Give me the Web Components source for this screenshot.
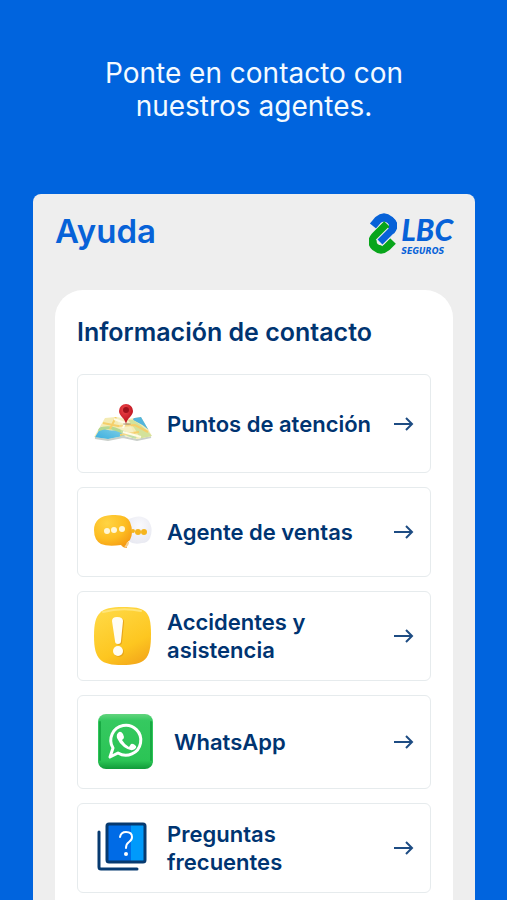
<!DOCTYPE html>
<html lang="es">
<head>
<meta charset="UTF-8">
<meta name="viewport" content="width=device-width, initial-scale=1">
<title>LBC Seguros - Ayuda</title>
<style>
    body {
        margin: 0;
        background: #0064de;
        color: #003471;
        font-family: Inter, "Open Sans", sans-serif;
    }
</style>
</head>
<body>

<help-page>
    <span slot="claim">Ponte en contacto con<br>nuestros agentes.</span>
    <help-panel heading="Ayuda">
        <brand-logo slot="logo"></brand-logo>
        <contact-card heading="Información de contacto">
            <contact-item href="#puntos">
                <svg slot="icon" width="58" height="67" viewBox="0 0 58 67" aria-hidden="true">
                    <defs>
                        <linearGradient id="water" x1="0" y1="1" x2="1" y2="0">
                            <stop offset="0" stop-color="#2faadf"/>
                            <stop offset="1" stop-color="#8ed4e6"/>
                        </linearGradient>
                        <radialGradient id="pin" cx="40%" cy="28%" r="70%">
                            <stop offset="0" stop-color="#f0484b"/>
                            <stop offset="1" stop-color="#b80d1a"/>
                        </radialGradient>
                        <clipPath id="sheet">
                            <path d="M11 28 L22 27 L34 29 L47 27 L58 46 L43 49 L29 46 L14 49 L0 47 Z"/>
                        </clipPath>
                    </defs>
                    <path d="M1 48 L14 50 L29 47 L43 50 L57 47" fill="none" stroke="#c9cfca" stroke-width="2"/>
                    <g clip-path="url(#sheet)">
                        <rect width="58" height="67" fill="#f4ebb4"/>
                        <path d="M0 49 L7 37 Q17 43 24 39 Q29 43 35 51 L14 52Z" fill="url(#water)"/>
                        <path d="M4 40 Q13 36 21 39 T42 48" fill="none" stroke="#b5d891" stroke-width="3"/>
                        <path d="M40 27 L50 27 L55 40 Q48 34 39 30Z" fill="#52b5dc"/>
                        <path d="M34 30 L39 30 Q48 35 58 46 L47 50 Q42 39 34 30Z" fill="#d3e29b"/>
                        <path d="M9 33 L24 36 L41 35 L54 42 M22 27 L16 39 M26 45 L45 42" fill="none" stroke="#f5cf6a" stroke-width="2"/>
                        <path d="M20 29 L31 33 L29 38 M29 42 L47 47" fill="none" stroke="#fffbe3" stroke-width="2"/>
                        <path d="M22 27 L34 29 L43 50 L29 47Z" fill="#fff" opacity=".2"/>
                    </g>
                    <ellipse cx="33" cy="34" rx="4" ry="1" fill="#745c38" opacity=".4"/>
                    <path d="M32 34 C31 28 25 26 25 21 A7 7 0 0 1 39 21 C39 26 33 28 32 34Z" fill="url(#pin)"/>
                    <circle cx="32" cy="20" r="3" fill="#9e111b"/>
                </svg>
                Puntos de atención
            </contact-item>
            <contact-item href="#ventas">
                <svg slot="icon" width="58" height="58" viewBox="0 0 58 58" aria-hidden="true">
                    <defs>
                        <radialGradient id="bubble" cx="35%" cy="25%" r="80%">
                            <stop offset="0" stop-color="#ffd443"/>
                            <stop offset=".6" stop-color="#fdbd22"/>
                            <stop offset="1" stop-color="#f59b14"/>
                        </radialGradient>
                        <radialGradient id="pale" cx="50%" cy="35%" r="65%">
                            <stop offset="0" stop-color="#fafafd"/>
                            <stop offset="1" stop-color="#e9eaf2"/>
                        </radialGradient>
                    </defs>
                    <path d="M33 17 Q46 10 54 17 Q60 25 56 35 Q54 40 48 40 Q40 42 34 38Z" fill="url(#pale)"/>
                    <path d="M18 12 Q33 11 36 19 Q40 29 36 37 Q31 40 33 45 Q29 45 27 42 Q14 44 7 41 Q0 37 0 27 Q0 13 18 12Z" fill="url(#bubble)"/>
                    <path d="M31 44 Q34 42 34 39" fill="none" stroke="#f6cf91" stroke-width="2"/>
                    <g fill="#f5b51e">
                        <circle cx="39" cy="28" r="2"/><circle cx="44" cy="29" r="3"/><circle cx="50" cy="29" r="3"/>
                    </g>
                    <g fill="#fff7d7">
                        <circle cx="13" cy="28" r="3"/><circle cx="20" cy="27" r="3"/><circle cx="28" cy="26" r="3"/>
                    </g>
                </svg>
                Agente de ventas
            </contact-item>
            <contact-item href="#asistencia">
                <svg slot="icon" width="58" height="58" viewBox="0 0 58 58" aria-hidden="true">
                    <defs>
                        <linearGradient id="alert" x1=".2" y1="0" x2=".7" y2="1">
                            <stop offset="0" stop-color="#ffd945"/>
                            <stop offset=".7" stop-color="#fdc620"/>
                            <stop offset="1" stop-color="#f4aa1b"/>
                        </linearGradient>
                    </defs>
                    <path d="M29 0 C51 0 57 3 57 27 C57 53 51 58 28 58 C7 58 0 53 0 29 C0 6 6 0 29 0Z" fill="url(#alert)"/>
                    <path d="M9 5 Q28 0 47 4" fill="none" stroke="#ffe477" stroke-width="2" stroke-linecap="round"/>
                    <path d="M20 14 Q20 10 24 10 Q29 10 29 14 L27 34 Q27 37 24 37 Q22 37 22 34Z" fill="#e8a51a" transform="translate(1 1)"/>
                    <path d="M18 14 Q18 10 23 10 Q29 10 29 14 L27 34 Q27 37 24 37 Q21 37 21 34Z" fill="#fffdf4"/>
                    <circle cx="25" cy="45" r="5" fill="#e8a51a"/>
                    <circle cx="24" cy="44" r="5" fill="#fffdf4"/>
                </svg>
                Accidentes y asistencia
            </contact-item>
            <contact-item href="#whatsapp">
                <svg slot="icon" width="65" height="62" viewBox="0 0 65 62" aria-hidden="true">
                    <defs>
                        <linearGradient id="tile" x1="0" y1="0" x2="0" y2="1">
                            <stop offset="0" stop-color="#63d47e"/>
                            <stop offset=".12" stop-color="#35c960"/>
                            <stop offset=".85" stop-color="#2bc455"/>
                            <stop offset="1" stop-color="#119b39"/>
                        </linearGradient>
                    </defs>
                    <rect x="4" y="3" width="55" height="55" rx="8" fill="url(#tile)"/>
                    <path d="M6 11 V49 M57 11 V49" stroke="#18a943" stroke-width="2" stroke-linecap="round"/>
                    <path d="M16 46 L19 37 A15 15 0 1 1 24 42 Z" fill="none" stroke="#fff" stroke-width="3" stroke-linejoin="round"/>
                    <path d="M25 21 Q27 20 29 23 L30 26 Q30 28 28 29 Q31 34 35 36 L37 33 Q39 32 42 35 Q43 36 41 38 Q37 41 30 36 Q25 32 23 27 Q22 23 25 21Z" fill="#fff"/>
                </svg>
                WhatsApp
            </contact-item>
            <contact-item href="#preguntas">
                <svg slot="icon" width="58" height="58" viewBox="0 0 58 58" aria-hidden="true">
                    <path d="M5 13 V48 Q5 50 7 50 H43" fill="none" stroke="#073a70" stroke-width="3" stroke-linecap="round"/>
                    <rect x="13" y="5" width="38" height="38" rx="2" fill="#006be6"/>
                    <rect x="37" y="5" width="14" height="38" fill="#009afb"/>
                    <rect x="13" y="5" width="38" height="38" rx="2" fill="none" stroke="#073a70" stroke-width="3"/>
                    <path d="M26 18 Q27 13 32 13 Q38 13 38 18 Q38 21 35 23 Q32 25 32 29" fill="none" stroke="#fff" stroke-width="2" stroke-linecap="round"/>
                    <circle cx="32" cy="35" r="2" fill="#fff"/>
                </svg>
                Preguntas frecuentes
            </contact-item>
        </contact-card>
    </help-panel>
</help-page>

<script>
class HelpPage extends HTMLElement {

    constructor() {
        super();
        this.attachShadow({ mode: 'open' });
        this.shadowRoot.innerHTML = `
            <style>
                :host {
                    display: flex;
                    flex-direction: column;
                    min-height: 100vh;
                    box-sizing: border-box;
                    padding: 57px 32px 0 33px;
                }
                p {
                    margin: 0 0 71px;
                    color: #f4faff;
                    font-size: 28px;
                    line-height: 33px;
                    text-align: center;
                }
            </style>
            <p><slot name="claim"></slot></p>
            <slot></slot>
        `;
    }
}

class HelpPanel extends HTMLElement {

    constructor() {
        super();
        this.attachShadow({ mode: 'open' });
    }

    connectedCallback() {
        this.shadowRoot.innerHTML = `
            <style>
                :host {
                    display: flex;
                    flex: 1;
                    flex-direction: column;
                    padding: 16px 22px 0;
                    background: #eeeeee;
                    border-radius: 8px 8px 0 0;
                }
                header {
                    display: flex;
                    justify-content: space-between;
                    align-items: flex-start;
                    height: 80px;
                }
                h1 {
                    margin: 0;
                    color: #0762d8;
                    font-size: 33px;
                    font-weight: 600;
                    line-height: 42px;
                }
            </style>
            <header>
                <h1>${this.getAttribute('heading')}</h1>
                <slot name="logo"></slot>
            </header>
            <slot></slot>
        `;
    }
}

class BrandLogo extends HTMLElement {

    constructor() {
        super();
        this.attachShadow({ mode: 'open' });
        this.shadowRoot.innerHTML = `
            <style>
                :host {
                    display: flex;
                    align-items: center;
                    gap: 4px;
                    padding-top: 2px;
                    color: #0762d8;
                }
                .words {
                    display: flex;
                    flex-direction: column;
                }
                .name {
                    font: italic 900 30px/35px Lato, sans-serif;
                }
                .sub {
                    font: italic bold 8px/9px "DejaVu Sans", sans-serif;
                }
            </style>
            <svg width="28" height="42" viewBox="0 0 28 42" aria-hidden="true">
                <g fill="none" stroke-linejoin="round">
                    <path d="M4 13 L9 7 Q15 2 21 7 Q27 12 22 18 L11 29" stroke="#0762d8" stroke-width="8"/>
                    <path d="M17 12 L6 23 Q1 29 6 34 Q12 39 18 34 L24 28" stroke="#eee" stroke-width="9"/>
                    <path d="M18 11 L6 23 Q1 29 6 34 Q12 39 18 34 L24 28" stroke="#08a51b" stroke-width="8"/>
                    <path d="M22 18 L10 30" stroke="#eee" stroke-width="9"/>
                    <path d="M21 7 Q27 12 22 18 L11 29" stroke="#0762d8" stroke-width="7"/>
                </g>
            </svg>
            <div class="words">
                <span class="name">LBC</span>
                <span class="sub">SEGUROS</span>
            </div>
        `;
    }
}

class ContactCard extends HTMLElement {

    constructor() {
        super();
        this.attachShadow({ mode: 'open' });
    }

    connectedCallback() {
        this.shadowRoot.innerHTML = `
            <style>
                :host {
                    display: block;
                    flex: 1;
                    padding: 26px 22px 6px;
                    background: #fff;
                    border-radius: 28px 28px 0 0;
                }
                h2 {
                    margin: 0 0 26px;
                    font-size: 25px;
                    font-weight: 600;
                    line-height: 32px;
                }
                nav {
                    display: flex;
                    flex-direction: column;
                    gap: 14px;
                }
            </style>
            <h2>${this.getAttribute('heading')}</h2>
            <nav><slot></slot></nav>
        `;
    }
}

class ContactItem extends HTMLElement {

    constructor() {
        super();
        this.attachShadow({ mode: 'open' });
    }

    connectedCallback() {
        this.shadowRoot.innerHTML = `
            <style>
                :host {
                    display: block;
                }
                a {
                    display: flex;
                    align-items: center;
                    gap: 15px;
                    padding: 15px 16px;
                    border: 1px solid #e6ebed;
                    border-radius: 6px;
                    color: inherit;
                    text-decoration: none;
                }
                .label {
                    flex: 1;
                    font-size: 22px;
                    font-weight: 600;
                    line-height: 28px;
                }
                ::slotted(svg) {
                    display: block;
                    flex: none;
                }
            </style>
            <a href="${this.getAttribute('href')}">
                <slot name="icon"></slot>
                <span class="label"><slot></slot></span>
                <svg width="20" height="16" viewBox="0 0 20 16" fill="none" stroke="#1d4c83" stroke-width="2" aria-hidden="true">
                    <path d="M0 8 H18 M12 2 L18 8 L12 14"/>
                </svg>
            </a>
        `;
    }
}

customElements.define('help-page', HelpPage);
customElements.define('help-panel', HelpPanel);
customElements.define('brand-logo', BrandLogo);
customElements.define('contact-card', ContactCard);
customElements.define('contact-item', ContactItem);
</script>
</body>
</html>
